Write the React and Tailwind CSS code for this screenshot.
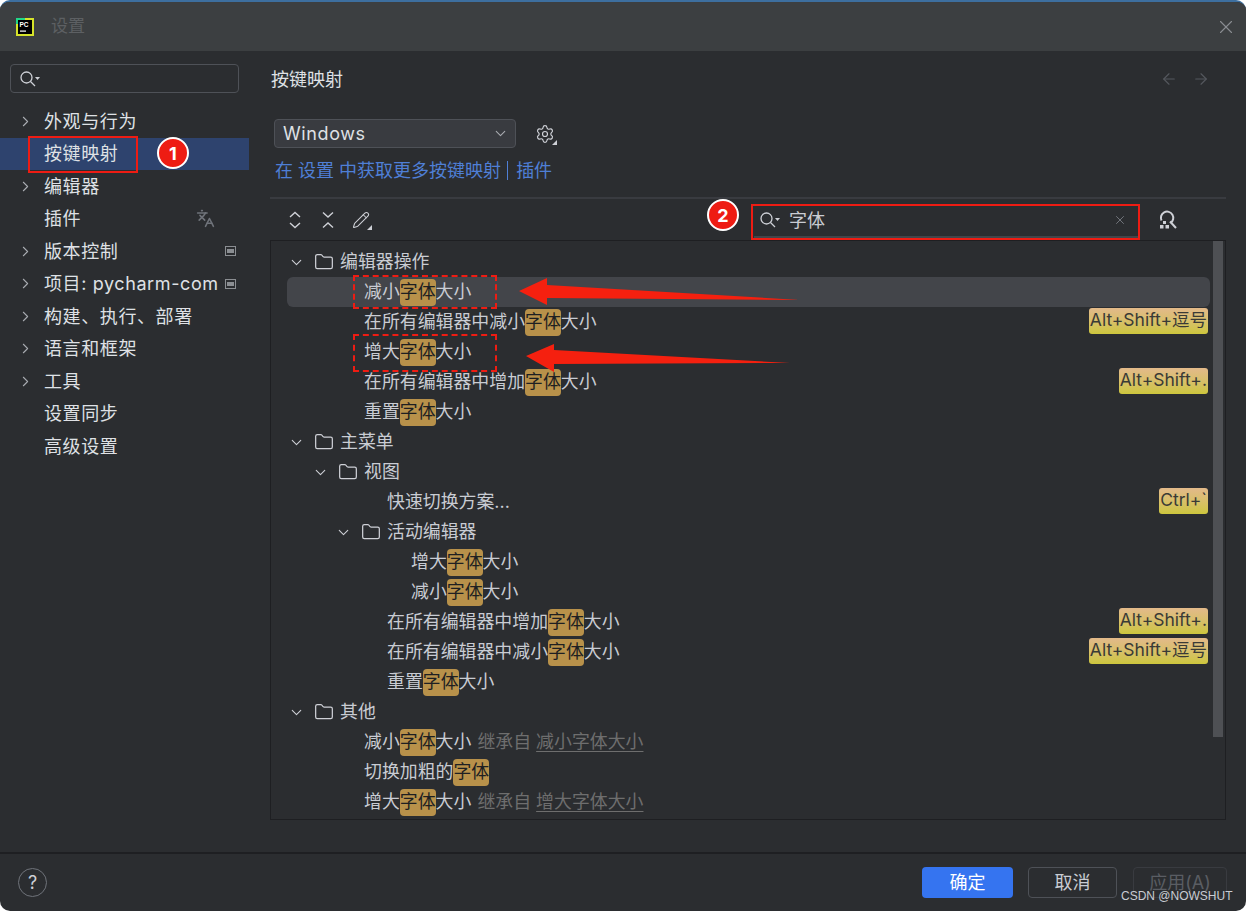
import React from "react";
import { ChevronRight, ChevronDown, Folder, X, ArrowLeft, ArrowRight, Settings, Pencil, Languages } from "lucide-react";

const cjk = { fontFamily: '"Inter", "Noto Sans CJK SC", sans-serif' };

const sideItems = [
  { label: "外观与行为", arrow: true },
  { label: "按键映射", active: true },
  { label: "编辑器", arrow: true },
  { label: "插件", translate: true },
  { label: "版本控制", arrow: true, box: true },
  { label: "项目: pycharm-com", arrow: true, box: true },
  { label: "构建、执行、部署", arrow: true },
  { label: "语言和框架", arrow: true },
  { label: "工具", arrow: true },
  { label: "设置同步" },
  { label: "高级设置" },
];

// pl = left offset of the row text inside the tree
const treeRows = [
  { pl: 69, folder: true, text: "编辑器操作" },
  { pl: 93, pre: "减小", post: "大小", selected: true },
  { pl: 93, pre: "在所有编辑器中减小", post: "大小", keys: "Alt+Shift+逗号" },
  { pl: 93, pre: "增大", post: "大小" },
  { pl: 93, pre: "在所有编辑器中增加", post: "大小", keys: "Alt+Shift+." },
  { pl: 93, pre: "重置", post: "大小" },
  { pl: 69, folder: true, text: "主菜单" },
  { pl: 93, folder: true, text: "视图" },
  { pl: 116, text: "快速切换方案...", keys: "Ctrl+`" },
  { pl: 116, folder: true, text: "活动编辑器" },
  { pl: 140, pre: "增大", post: "大小" },
  { pl: 140, pre: "减小", post: "大小" },
  { pl: 116, pre: "在所有编辑器中增加", post: "大小", keys: "Alt+Shift+." },
  { pl: 116, pre: "在所有编辑器中减小", post: "大小", keys: "Alt+Shift+逗号" },
  { pl: 116, pre: "重置", post: "大小" },
  { pl: 69, folder: true, text: "其他" },
  { pl: 93, pre: "减小", post: "大小", inherit: "减小字体大小" },
  { pl: 93, pre: "切换加粗的", post: "" },
  { pl: 93, pre: "增大", post: "大小", inherit: "增大字体大小" },
  { pl: 238, chipOnly: true },
];

function SearchGlyph({ className }) {
  return (
    <svg className={className} width="22" height="18" viewBox="0 0 22 18" fill="none" stroke="#ced0d6" strokeWidth="1.3">
      <circle cx="7.5" cy="7.5" r="5.5" />
      <path d="M11.5 11.5L16 16" />
      <path d="M16 7h5l-2.5 3z" fill="#ced0d6" stroke="none" />
    </svg>
  );
}

function Highlight({ children }) {
  return <span className="inline-flex h-[27px] items-center rounded-[4px] bg-[#b8914a] text-[#1e1f22]">{children}</span>;
}

function TreeRow({ row }) {
  return (
    <div
      className={`relative flex h-[30px] shrink-0 items-center text-[17.9px] text-[#c9ccd3] ${row.selected ? "ml-[16px] mr-[15px] rounded-[6px] bg-[#43454a]" : ""}`}
      style={{ paddingLeft: row.selected ? row.pl - 16 : row.pl }}
    >
      {row.folder && (
        <>
          <ChevronDown className="absolute text-[#ced0d6]" style={{ left: row.pl - 52 }} size={17} strokeWidth={1.5} />
          <Folder className="absolute text-[#ced0d6]" style={{ left: row.pl - 26 }} size={20} strokeWidth={1.5} />
        </>
      )}
      {row.chipOnly && <span className="h-[27px] w-[32px] rounded-[4px] bg-[#b8914a]" />}
      {row.text && <span className="whitespace-nowrap">{row.text}</span>}
      {row.pre !== undefined && (
        <span className="flex items-center whitespace-nowrap">
          {row.pre}
          <Highlight>字体</Highlight>
          {row.post}
        </span>
      )}
      {row.inherit && (
        <span className="ml-[6px] whitespace-nowrap text-[#6e6e6e]">
          继承自 <span className="underline underline-offset-[3px]">{row.inherit}</span>
        </span>
      )}
      {row.keys && (
        <span className="mb-[3px] ml-auto mr-[17px] flex h-[26px] items-center rounded-[3px] bg-gradient-to-b from-[#e3b98a] to-[#cdc63c] px-[1px] text-[17.5px] text-[#3a3a36]">
          {row.keys}
        </span>
      )}
    </div>
  );
}

function Badge({ n, className }) {
  return (
    <div className={`absolute flex h-[32px] w-[32px] items-center justify-center rounded-full border-[2px] border-white bg-[#ee1c13] text-[18px] font-bold text-white ${className}`}>
      {n}
    </div>
  );
}

export default function App() {
  return (
    <div className="relative h-[911px] w-[1246px] overflow-hidden bg-white" style={cjk}>
      <div className="flex h-full w-full flex-col overflow-hidden rounded-[10px] border-t-[2px] border-[#3d6f9f] bg-[#2b2d30]">
        {/* title bar */}
        <div className="flex h-[49px] shrink-0 items-center bg-[#3c3f41] pl-[16px]">
          <svg width="18" height="18" viewBox="0 0 18 18">
            <rect width="18" height="18" fill="#d6e32a" />
            <rect x="0" y="0" width="9" height="6" fill="#21d789" />
            <rect x="2" y="2" width="14" height="14" fill="#000" />
            <rect x="4" y="12.5" width="6" height="1.2" fill="#fff" />
            <text x="3.5" y="9" fontSize="6.5" fontWeight="700" fill="#fff" fontFamily="Liberation Sans">PC</text>
          </svg>
          <span className="ml-[17px] text-[17px] text-[#5d6063]">设置</span>
          <X className="ml-auto mr-[9px] text-[#8b8e92]" size={22} strokeWidth={1.2} />
        </div>

        <div className="flex min-h-0 flex-1">
          {/* sidebar */}
          <div className="flex w-[250px] shrink-0 flex-col pt-[13px]">
            <div className="mx-[10px] flex h-[29px] w-[229px] items-center rounded-[4px] border border-[#4e5157] pl-[8px]">
              <SearchGlyph />
            </div>
            <div className="mt-[12px] flex flex-col">
              {sideItems.map((item) => (
                <div
                  key={item.label}
                  className={`relative flex h-[32.5px] items-center pl-[44px] text-[18px] tracking-[0.6px] text-[#dfe1e5] ${item.active ? "w-[249px] bg-[#2e436e]" : ""}`}
                >
                  {item.arrow && <ChevronRight className="absolute left-[17px] text-[#a8abb0]" size={17} strokeWidth={1.5} />}
                  <span className="whitespace-nowrap">{item.label}</span>
                  {item.translate && <Languages className="absolute left-[196px] text-[#6f737a]" size={19} strokeWidth={2} />}
                  {item.box && (
                    <span className="absolute left-[225px] flex h-[10px] w-[11px] items-center justify-center border border-[#8b8e92]">
                      <span className="h-[4px] w-[7px] bg-[#8b8e92]" />
                    </span>
                  )}
                </div>
              ))}
            </div>
          </div>

          {/* main panel */}
          <div className="flex min-w-0 flex-1 flex-col pl-[20px] pr-[20px]">
            <div className="flex h-[56px] shrink-0 items-center pl-[1px] text-[18px] text-[#dfe1e5]">
              <span>按键映射</span>
              <ArrowLeft className="ml-auto text-[#55585e]" size={18} strokeWidth={1.5} />
              <ArrowRight className="ml-[14px] mr-[16px] text-[#55585e]" size={18} strokeWidth={1.5} />
            </div>
            <div className="mt-[12px] flex items-center pl-[4px]">
              <div className="flex h-[29px] w-[242px] items-center rounded-[4px] border border-[#4e5157] bg-[#393b40] pl-[8px] pr-[6px] text-[18px] tracking-[0.6px] text-[#dfe1e5]">
                <span>Windows</span>
                <ChevronDown className="ml-auto text-[#a8abb0]" size={17} strokeWidth={1.5} />
              </div>
              <div className="relative ml-[19px]">
                <Settings className="text-[#ced0d6]" size={20} strokeWidth={1.4} />
                <span className="absolute -bottom-[1px] -right-[2px] h-0 w-0 border-b-[5px] border-l-[5px] border-b-[#ced0d6] border-l-transparent" />
              </div>
            </div>
            <div className="ml-[5px] mt-[9px] flex items-center text-[18px] text-[#4f7fd6]">
              <span className="whitespace-pre">在 设置 中获取更多按键映射</span>
              <span className="ml-[6px] mr-[8px] h-[19px] w-[1px] bg-[#4f7fd6]" />
              <span>插件</span>
            </div>
            <div className="mt-[13px] h-[2px] w-full shrink-0 bg-[#393b40]" />
            {/* toolbar */}
            <div className="flex h-[41px] shrink-0 items-center pl-[16px]">
              <svg width="18" height="18" viewBox="0 0 18 18" fill="none" stroke="#ced0d6" strokeWidth="1.4">
                <path d="M4 6l5-4.5L14 6M4 12l5 4.5L14 12" />
              </svg>
              <svg className="ml-[15px]" width="18" height="18" viewBox="0 0 18 18" fill="none" stroke="#ced0d6" strokeWidth="1.4">
                <path d="M4 1.5l5 4.5 5-4.5M4 16.5l5-4.5 5 4.5" />
              </svg>
              <div className="relative ml-[15px]">
                <Pencil className="text-[#ced0d6]" size={18} strokeWidth={1.4} />
                <span className="absolute -bottom-[1px] -right-[2px] h-0 w-0 border-b-[5px] border-l-[5px] border-b-[#ced0d6] border-l-transparent" />
              </div>
              <div className="relative ml-[384px] flex h-[37px] w-[384px] items-center border-b-[2px] border-[#43454a] pl-[5px] pt-[3px]">
                <SearchGlyph />
                <span className="ml-[8px] text-[18px] text-[#c9ccd3]">字体</span>
                <X className="ml-auto mr-[11px] text-[#7a7e85]" size={14} strokeWidth={1.5} />
              </div>
              <svg className="ml-[20px]" width="20" height="20" viewBox="0 0 20 20" fill="none" stroke="#ced0d6" strokeWidth="2">
                <path d="M3.5 10.5A6.2 6.2 0 1 1 12.5 13" />
                <path d="M12 11.5L18 18" />
                <rect x="5" y="11" width="3" height="3" fill="#ced0d6" stroke="none" />
                <rect x="2" y="15" width="3.5" height="3.5" fill="#ced0d6" stroke="none" />
                <rect x="7.5" y="15" width="3.5" height="3.5" fill="#ced0d6" stroke="none" />
              </svg>
            </div>
            {/* key tree */}
            <div className="relative h-[580px] shrink-0 overflow-hidden border border-[#1e1f22] pt-[6px]">
              <div className="flex flex-col">
                {treeRows.map((row, i) => (
                  <TreeRow key={i} row={row} />
                ))}
              </div>
              <div className="absolute right-[2px] top-0 h-[496px] w-[10px] bg-[#4e5054]" />
            </div>
          </div>
        </div>

        {/* footer */}
        <div className="flex h-[59px] shrink-0 items-center border-t-[2px] border-[#1e1f22] pl-[18px] text-[18px]">
          <div className="flex h-[29px] w-[29px] items-center justify-center rounded-full border border-[#6f737a] text-[#ced0d6]">?</div>
          <button className="ml-[875px] h-[31px] w-[91px] rounded-[4px] bg-[#3574f0] text-white">确定</button>
          <button className="ml-[15px] h-[31px] w-[89px] rounded-[4px] border-[1.5px] border-[#4e5157] text-[#c9ccd3]">取消</button>
          <button className="ml-[16px] h-[31px] w-[94px] rounded-[4px] border-[1.5px] border-[#393b40] text-[#5a5d63]">应用(A)</button>
        </div>
      </div>

      {/* annotations drawn over the screenshot */}
      <div className="absolute left-[28px] top-[136px] h-[37px] w-[110px] border-[2px] border-[#ee1c13]" />
      <Badge n="1" className="left-[157px] top-[137px]" />
      <Badge n="2" className="left-[707px] top-[199px]" />
      <div className="absolute left-[751px] top-[204px] h-[36px] w-[389px] border-[2px] border-[#ee1c13]" />
      <div className="absolute left-[353px] top-[275px] h-[34px] w-[144px] border-[2px] border-dashed border-[#ee1c13]" />
      <div className="absolute left-[353px] top-[334px] h-[38px] w-[144px] border-[2px] border-dashed border-[#ee1c13]" />
      <svg className="pointer-events-none absolute left-0 top-0" width="1246" height="911">
        <polygon points="519,291 547,278 547,285 800,300 547,298 547,305" fill="#f5200f" />
        <polygon points="526,356 554,344 554,350 790,363 554,364 554,372" fill="#f5200f" />
      </svg>
      <div className="absolute left-[1121px] top-[887px] whitespace-nowrap text-[12px] text-[#c9ccd3] [font-family:'Liberation_Sans',sans-serif]">
        CSDN @NOWSHUT
      </div>
    </div>
  );
}
